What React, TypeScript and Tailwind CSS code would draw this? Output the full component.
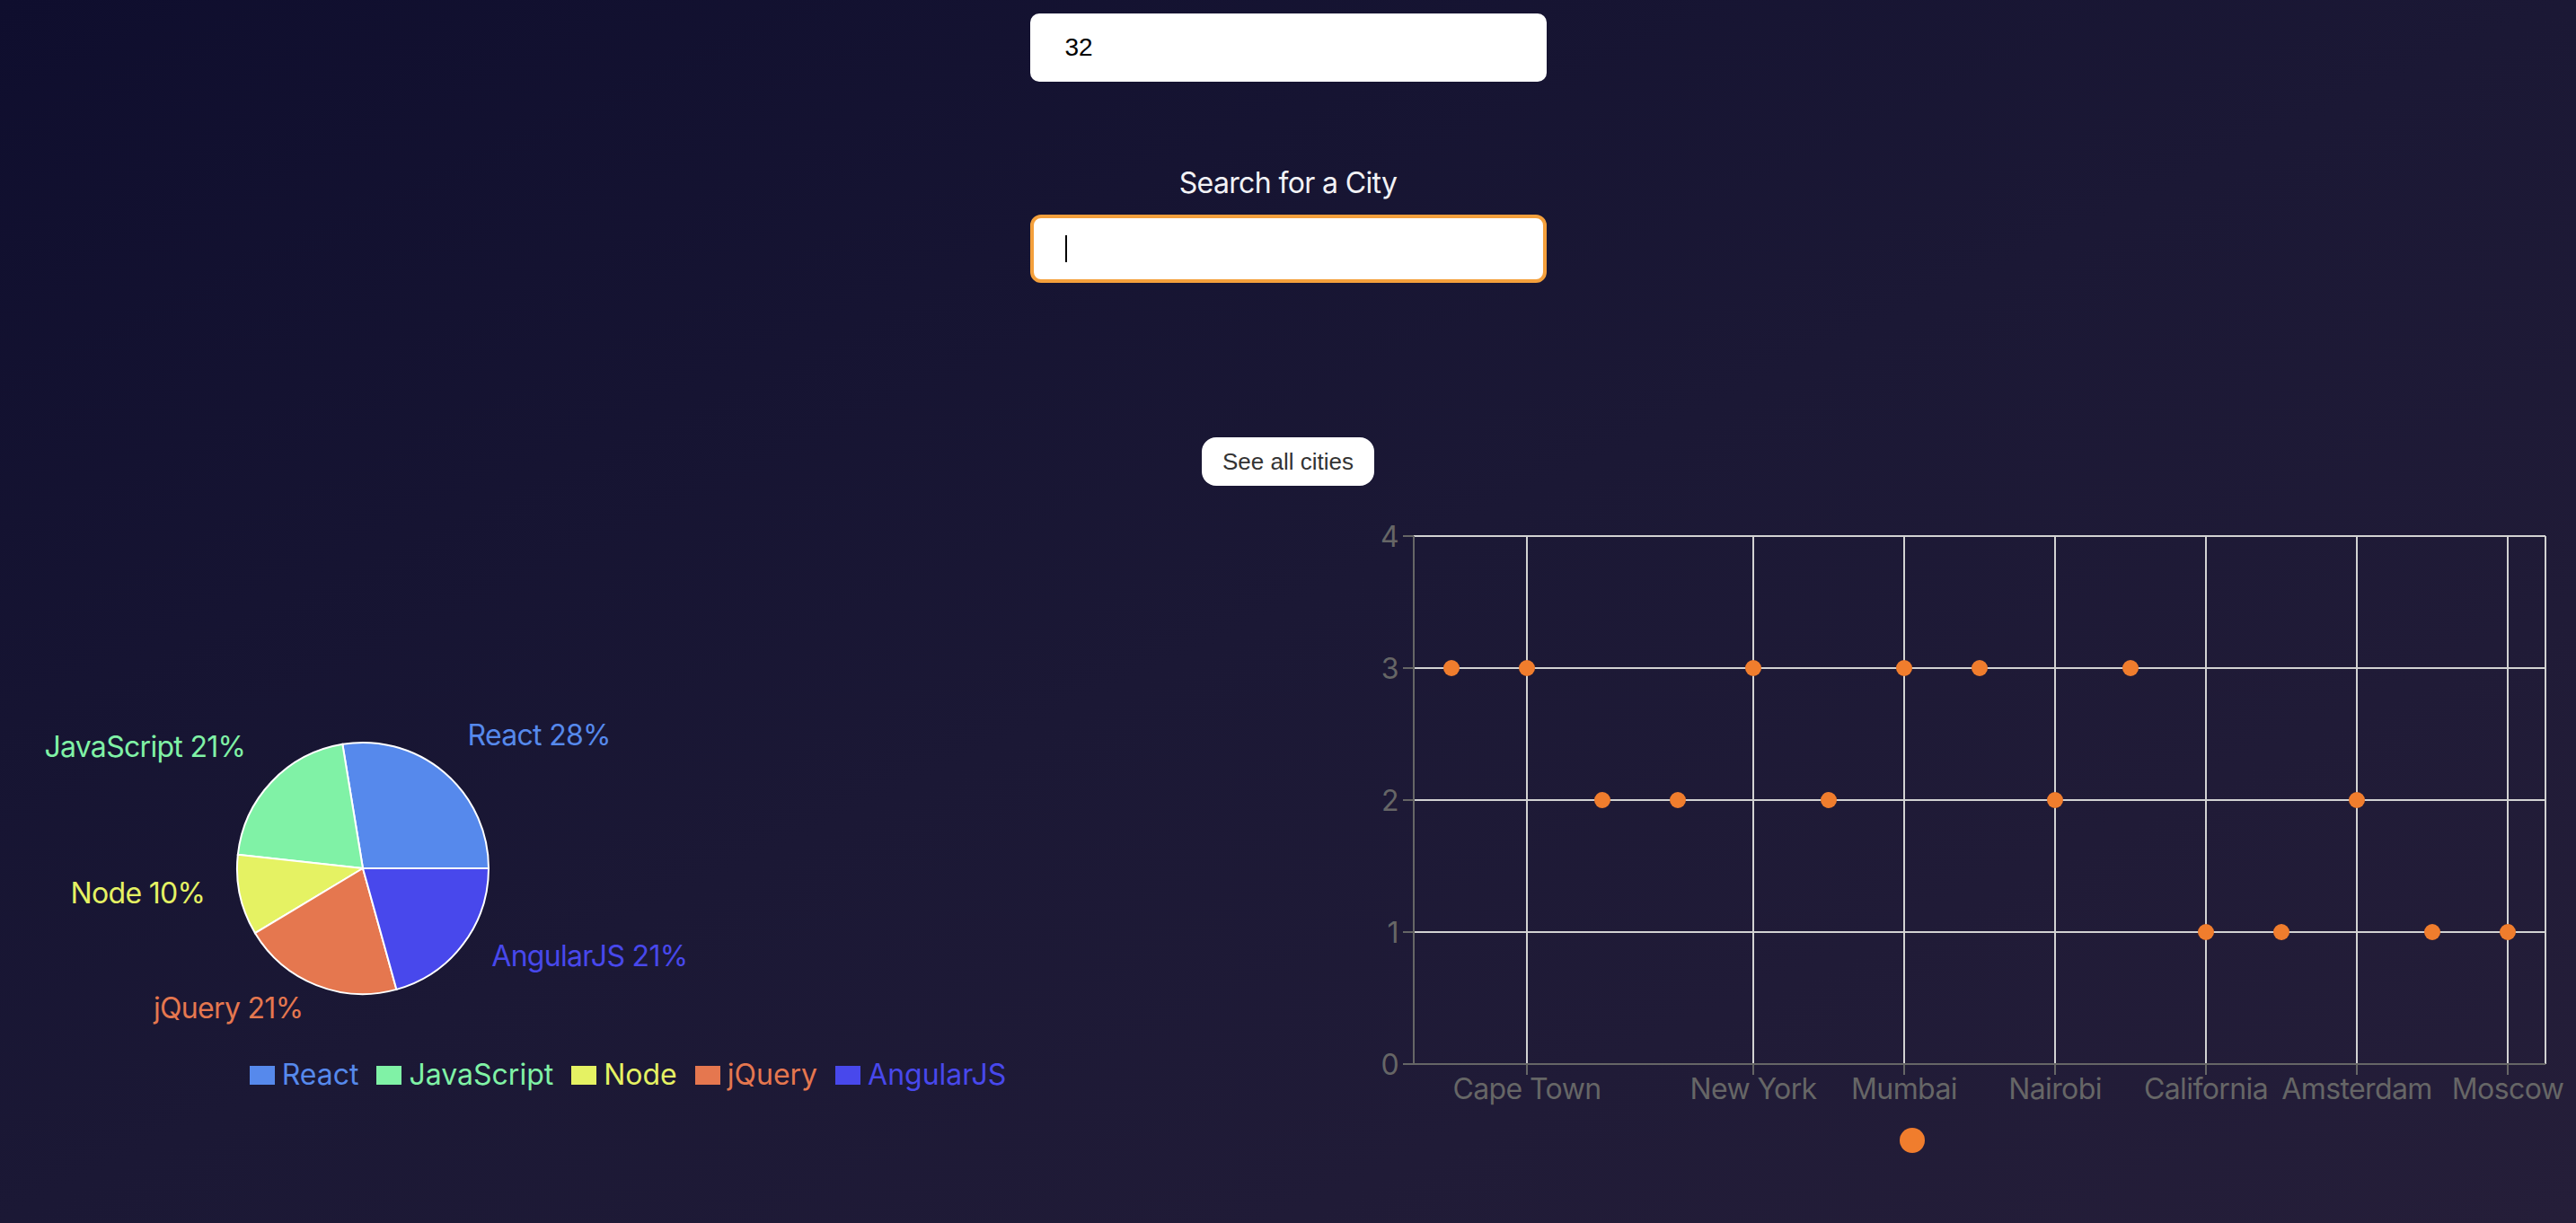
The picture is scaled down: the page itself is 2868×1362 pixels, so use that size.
const languages = [
  { name: 'React', value: 8, color: '#5689ec' },
  { name: 'JavaScript', value: 6, color: '#80f2a6' },
  { name: 'Node', value: 3, color: '#e5f263' },
  { name: 'jQuery', value: 6, color: '#e5774f' },
  { name: 'AngularJS', value: 6, color: '#4848ec' },
]

const cities = [
  { name: 'Lagos', rating: 3 },
  { name: 'Cape Town', rating: 3 },
  { name: 'Accra', rating: 2 },
  { name: 'London', rating: 2 },
  { name: 'New York', rating: 3 },
  { name: 'Paris', rating: 2 },
  { name: 'Mumbai', rating: 3 },
  { name: 'Tokyo', rating: 3 },
  { name: 'Nairobi', rating: 2 },
  { name: 'Berlin', rating: 3 },
  { name: 'California', rating: 1 },
  { name: 'Dubai', rating: 1 },
  { name: 'Amsterdam', rating: 2 },
  { name: 'Sydney', rating: 1 },
  { name: 'Moscow', rating: 1 },
]

// only every other label fits on the axis
const shownTicks = [1, 4, 6, 8, 10, 12, 14]

function LanguagePie() {
  const cx = 404
  const cy = 407
  const r = 140
  const total = languages.reduce((s, l) => s + l.value, 0)
  let start = 0
  const rad = Math.PI / 180

  const slices = languages.map((l) => {
    const sweep = (l.value / total) * 360
    const end = start + sweep
    const x1 = cx + r * Math.cos(start * rad)
    const y1 = cy - r * Math.sin(start * rad)
    const x2 = cx + r * Math.cos(end * rad)
    const y2 = cy - r * Math.sin(end * rad)
    const mid = start + sweep / 2
    const lx = cx + (r + 40) * Math.cos(mid * rad)
    const ly = cy - (r + 40) * Math.sin(mid * rad)
    const d = `M${cx},${cy} L${x1},${y1} A${r},${r} 0 ${sweep > 180 ? 1 : 0} 0 ${x2},${y2} Z`
    start = end
    return { ...l, d, lx, ly, pct: Math.round((l.value / total) * 100) }
  })

  return (
    <div className="flex w-1/2 flex-col">
      <svg width="1434" height="617" className="block">
        {slices.map((s) => (
          <path key={s.name} d={s.d} fill={s.color} stroke="#ffffff" strokeWidth="2" />
        ))}
        {slices.map((s) => (
          <text
            key={s.name + '-label'}
            x={s.lx}
            y={s.ly}
            fill={s.color}
            fontSize="32"
            letterSpacing="-0.7"
            textAnchor={s.lx > cx ? 'start' : 'end'}
            fontFamily="Inter, sans-serif"
          >
            {s.name} {s.pct}%
          </text>
        ))}
      </svg>
      <ul className="flex h-[40px] items-center justify-center pr-[16px] text-[32px] leading-[40px]">
        {languages.map((l) => (
          <li key={l.name} className="mr-[20px] flex items-center">
            <span className="mr-[8px] inline-block h-[21px] w-[28px]" style={{ backgroundColor: l.color }} />
            <span style={{ color: l.color }}>{l.name}</span>
          </li>
        ))}
      </ul>
    </div>
  )
}

function CityScatter() {
  const left = 140
  const right = 1400
  const top = 37
  const bottom = 625
  const band = (right - left) / cities.length
  const unit = (bottom - top) / 4
  const xAt = (i: number) => left + band / 2 + band * i
  const yAt = (v: number) => bottom - unit * v

  return (
    <div className="flex w-1/2 flex-col">
      <svg width="1434" height="696" className="block" fontFamily="Inter, sans-serif" letterSpacing="-0.6">
        {[0, 1, 2, 3, 4].map((v) => (
          <line key={'h' + v} x1={left} x2={right} y1={yAt(v)} y2={yAt(v)} stroke="#d2d2d2" strokeWidth="2" />
        ))}
        {shownTicks.map((i) => (
          <line key={'v' + i} x1={xAt(i)} x2={xAt(i)} y1={top} y2={bottom} stroke="#d2d2d2" strokeWidth="2" />
        ))}
        <line x1={right} x2={right} y1={top} y2={bottom} stroke="#d2d2d2" strokeWidth="2" />

        <line x1={left} x2={left} y1={top} y2={bottom} stroke="#666666" strokeWidth="2" />
        <line x1={left} x2={right} y1={bottom} y2={bottom} stroke="#666666" strokeWidth="2" />

        {[0, 1, 2, 3, 4].map((v) => (
          <g key={'yt' + v}>
            <line x1={left - 12} x2={left} y1={yAt(v)} y2={yAt(v)} stroke="#666666" strokeWidth="2" />
            <text x={left - 17} y={yAt(v)} fill="#666666" fontSize="32" textAnchor="end" dominantBaseline="central">
              {v}
            </text>
          </g>
        ))}
        {shownTicks.map((i) => (
          <g key={'xt' + i}>
            <line x1={xAt(i)} x2={xAt(i)} y1={bottom} y2={bottom + 12} stroke="#666666" strokeWidth="2" />
            <text x={xAt(i)} y={bottom + 39} fill="#666666" fontSize="32" textAnchor="middle">
              {cities[i].name}
            </text>
          </g>
        ))}

        {cities.map((c, i) => (
          <circle key={c.name} cx={xAt(i)} cy={yAt(c.rating)} r="9" fill="#f07d2d" />
        ))}
      </svg>
      <div className="flex h-[28px] justify-center pr-[44px]">
        <span className="h-[28px] w-[28px] rounded-full bg-[#f07d2d]" />
      </div>
    </div>
  )
}

export default function App() {
  return (
    <div className="min-h-screen w-full bg-linear-to-br from-[#0f0e2e] via-[#1b1835] to-[#251e39] font-['Inter',sans-serif]">
      <div className="flex flex-col items-center">
        <div className="mt-[15px] flex h-[76px] w-[575px] items-center rounded-[10px] bg-white px-[39px] font-['Liberation_Sans',sans-serif] text-[28px] text-black">
          32
        </div>

        <label className="mt-[93px] text-[32px] leading-[40px] tracking-[-0.02em] text-[#f2f2f5]">Search for a City</label>
        <div className="mt-[15px] flex h-[76px] w-[575px] items-center rounded-[12px] border-[4px] border-[#f4a03c] bg-white px-[35px]">
          <span className="h-[30px] w-[2px] bg-black" />
        </div>

        <button className="mt-[172px] flex h-[54px] w-[192px] items-center justify-center rounded-[16px] bg-white font-['Liberation_Sans',sans-serif] text-[26px] text-[#333333]">
          See all cities
        </button>
      </div>

      <div className="mt-[19px] flex w-full">
        <LanguagePie />
        <CityScatter />
      </div>
    </div>
  )
}
